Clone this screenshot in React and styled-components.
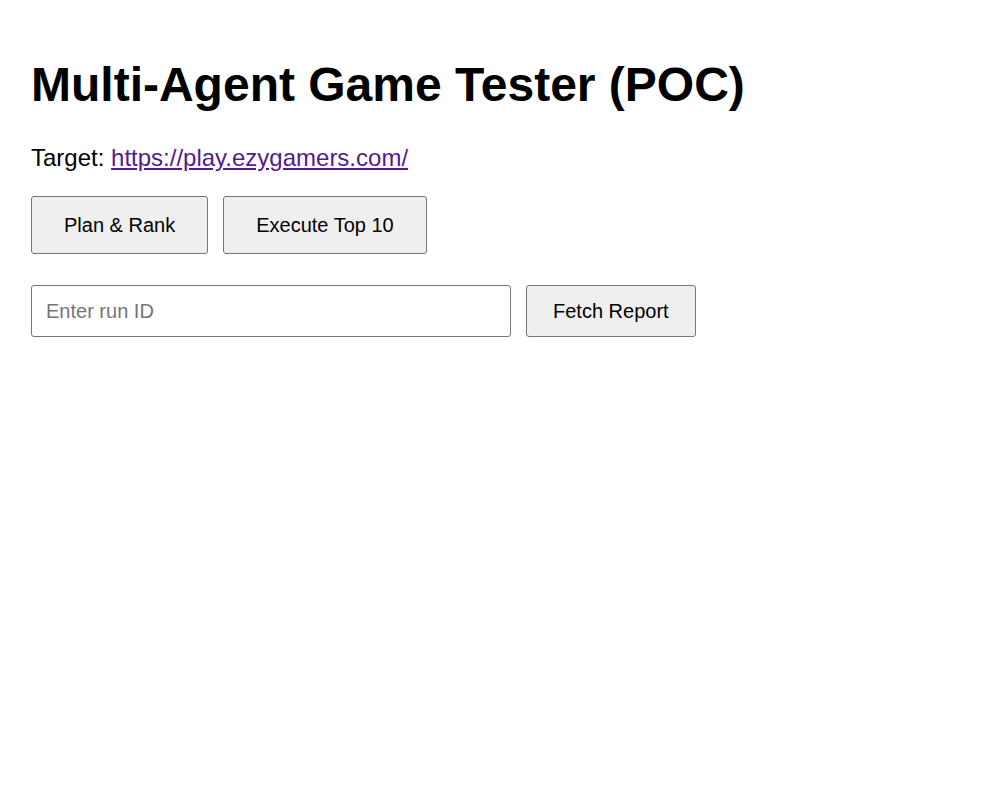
import React, { useState } from "react";
import styled, { createGlobalStyle } from "styled-components";

const GlobalStyle = createGlobalStyle`
  body {
    margin: 0;
    background: #fff;
    font-family: "Liberation Sans", Arial, sans-serif;
    color: #000;
  }
`;

export default function App() {
  const [runId, setRunId] = useState("");

  return (
    <>
      <GlobalStyle />
      <Page>
        <Title>Multi-Agent Game Tester (POC)</Title>
        <TargetLine>
          Target:{" "}
          <TargetLink href="https://play.ezygamers.com/">
            https://play.ezygamers.com/
          </TargetLink>
        </TargetLine>
        <Row>
          <Button>Plan &amp; Rank</Button>
          <Button>Execute Top 10</Button>
        </Row>
        <Row>
          <RunInput
            placeholder="Enter run ID"
            value={runId}
            onChange={(e) => setRunId(e.target.value)}
          />
          <Button $compact>Fetch Report</Button>
        </Row>
      </Page>
    </>
  );
}

const Page = styled.div`
  padding: 32px 31px;
  display: flex;
  flex-direction: column;
  align-items: flex-start;
`;

const Title = styled.h1`
  margin: 25px 0 0 0;
  font-size: 48px;
  font-weight: bold;
  line-height: 56px;
`;

const TargetLine = styled.p`
  margin: 31px 0 0 0;
  font-size: 24px;
  line-height: 28px;
`;

const TargetLink = styled.a`
  color: #551a8b;
  text-decoration: underline;
`;

const Row = styled.div`
  display: flex;
  gap: 15px;
  margin-top: 24px;
  & + & {
    margin-top: 31px;
  }
`;

const Button = styled.button`
  font-family: "Liberation Sans", Arial, sans-serif;
  font-size: 20px;
  color: #000;
  background: #efefef;
  border: 1px solid #767676;
  border-radius: 3px;
  height: ${(p) => (p.$compact ? "52px" : "58px")};
  padding: ${(p) => (p.$compact ? "0 26px" : "0 32px")};
  cursor: pointer;
`;

const RunInput = styled.input`
  width: 480px;
  height: 52px;
  box-sizing: border-box;
  padding: 0 14px;
  font-family: "Liberation Sans", Arial, sans-serif;
  font-size: 20px;
  border: 1px solid #767676;
  border-radius: 3px;
  outline: none;
  &::placeholder {
    color: #757575;
  }
`;
